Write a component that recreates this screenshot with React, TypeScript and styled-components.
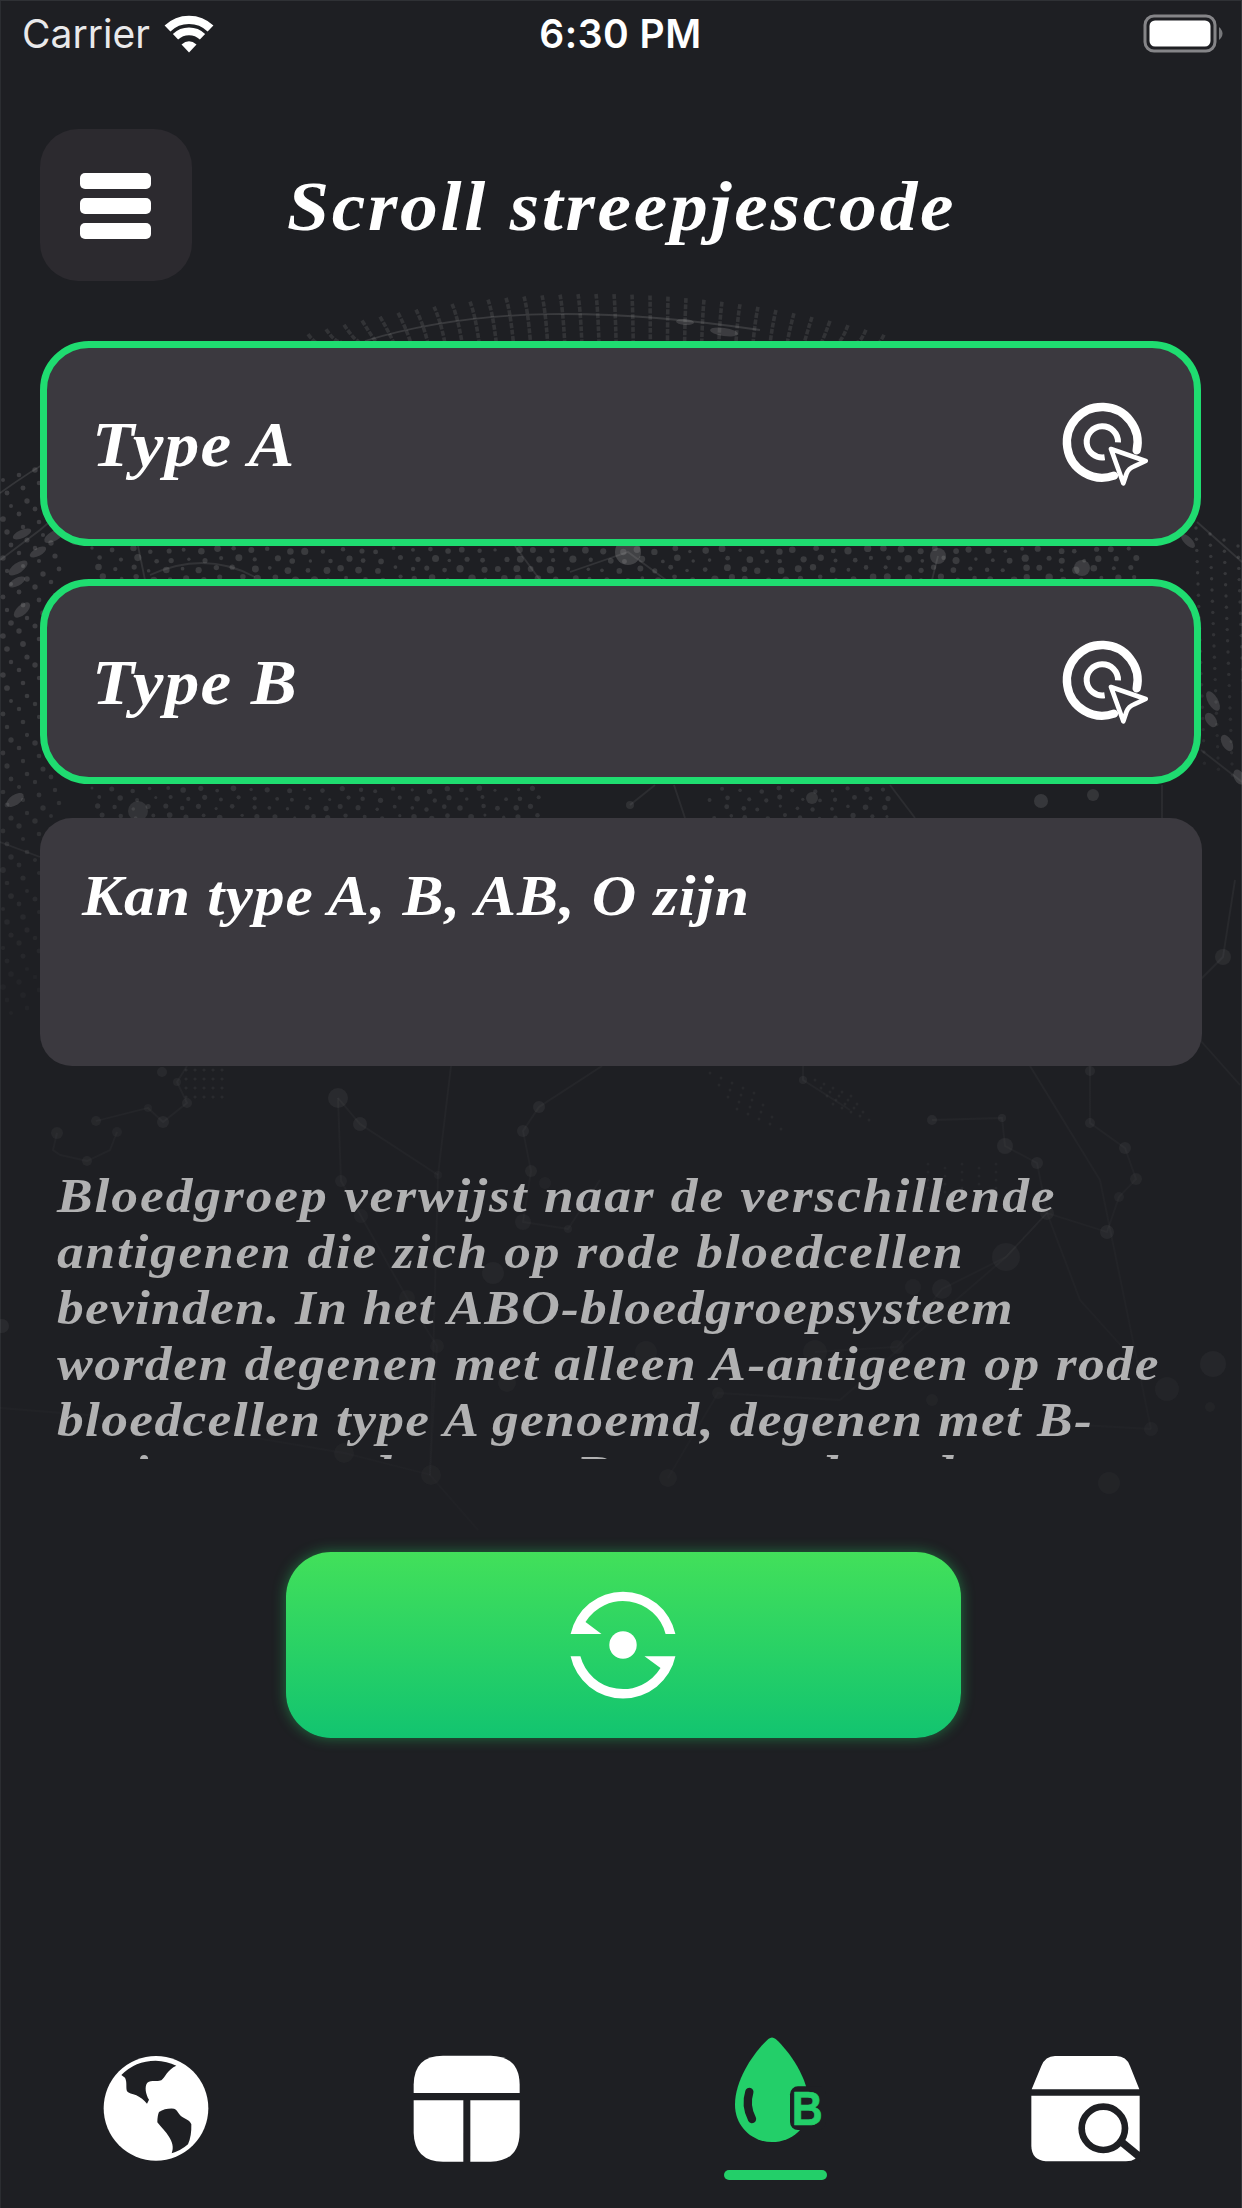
import React from "react";
import styled, { createGlobalStyle } from "styled-components";

const serif = `"Liberation Serif", "Times New Roman", serif`;
const sans = `Inter, "Liberation Sans", sans-serif`;

const GlobalStyle = createGlobalStyle`
  *, *::before, *::after { box-sizing: border-box; }
  body { margin: 0; background: #1e1f23; }
  button { border: 0; padding: 0; background: none; color: inherit; font: inherit; }
`;

const Screen = styled.main`
  position: relative;
  display: flex;
  flex-direction: column;
  width: 1242px;
  height: 2208px;
  overflow: hidden;
  background: #1e1f23;
  box-shadow: inset 0 1px #2f3135, inset 1px 0 #2b2d31, inset -1px 0 #34363a;
  color: #fff;
`;

const Backdrop = styled.svg`
  position: absolute;
  inset: 0;
  width: 1242px;
  height: 2208px;
`;

const StatusBar = styled.header`
  position: relative;
  display: grid;
  grid-template-columns: 1fr auto 1fr;
  align-items: center;
  height: 67px;
  padding: 0 19px 0 22px;
  font-family: ${sans};
`;

const Carrier = styled.div`
  display: flex;
  align-items: center;
  gap: 14px;
  font-size: 39px;
  color: #e9e9ea;
`;

const Clock = styled.time`
  margin-right: 4px;
  font-size: 39px;
  font-weight: 600;
  letter-spacing: 0.5px;
`;

const Battery = styled.svg`
  justify-self: end;
`;

const TopBar = styled.div`
  position: relative;
  display: flex;
  align-items: center;
  height: 152px;
  margin: 62px 40px 0;
`;

const MenuButton = styled.button`
  display: flex;
  flex-direction: column;
  align-items: center;
  justify-content: center;
  gap: 9px;
  width: 152px;
  height: 152px;
  padding: 2px 2px 0 0;
  border-radius: 38px;
  background: #2c2a2f;
`;

const MenuLine = styled.span`
  width: 71px;
  height: 16px;
  border-radius: 5px;
  background: #fff;
`;

/* Bold italic serif, slightly extended like a Century face. */
const WideText = styled.span<{ $spacing: number }>`
  display: block;
  transform: scaleX(1.08);
  transform-origin: 0 50%;
  letter-spacing: ${(p) => p.$spacing}px;
  white-space: nowrap;
`;

const Title = styled.h1`
  margin: 0;
  padding: 4px 0 0 95px;
  font: italic bold 70px/90px ${serif};
`;

const Fields = styled.section`
  position: relative;
  display: flex;
  flex-direction: column;
  margin: 60px 40px 0;
`;

const SelectField = styled.button`
  display: flex;
  align-items: center;
  justify-content: space-between;
  width: 1161px;
  height: 205px;
  margin-bottom: 33px;
  padding: 0 46px 0 45px;
  border: 7px solid #1fdc70;
  border-radius: 49px;
  background: #3b393f;
`;

const FieldLabel = styled.span`
  padding-top: 2px;
  font: italic bold 64px/80px ${serif};
`;

const ResultBox = styled.div`
  height: 248px;
  margin-top: 1px;
  padding: 43px 42px;
  border-radius: 32px;
  background: #3b393f;
  font: italic bold 57px/70px ${serif};
`;

const Description = styled.article`
  position: relative;
  height: 295px;
  margin: 98px 40px 0;
  padding: 4px 0 0 17px;
  overflow: hidden;
  color: #b1b1b2;
  font: italic bold 49.5px/55.9px ${serif};

  & > :last-child {
    margin-top: -3px;
  }
`;

const ConvertButton = styled.button`
  position: relative;
  display: flex;
  align-items: center;
  justify-content: center;
  align-self: flex-start;
  width: 675px;
  height: 186px;
  margin: 93px 0 0 286px;
  padding-right: 2px;
  border-radius: 45px;
  background: linear-gradient(#42e05a, #12c470);
  box-shadow: 0 0 14px rgba(36, 210, 100, 0.45);
`;

const TabBar = styled.nav`
  position: relative;
  display: flex;
  justify-content: space-between;
  align-items: flex-start;
  margin-top: 298px;
  padding: 0 101px 0 103px;
`;

const Tab = styled.button<{ $width: number }>`
  display: flex;
  flex-direction: column;
  align-items: center;
  width: ${(p) => p.$width}px;
  height: 150px;
`;

const ActiveBar = styled.span`
  width: 103px;
  height: 10px;
  margin-top: 8px;
  border-radius: 5px;
  background: #23cf69;
`;

type Dot = [number, number, number, number];

const noise = (n: number) => {
  const v = Math.sin(n * 127.1) * 43758.5453;
  return v - Math.floor(v);
};

const dots: Dot[] = [];
for (let col = 0; col < 60; col++) {
  for (let row = 0; row < 4; row++) {
    const x = 92 + col * 17.5 + (row % 2) * 5;
    if (x < 1160) dots.push([x + noise(col + row) * 8, 548 + row * 9.5 + noise(col * 5) * 4, 1.7 + noise(col * 7 + row) * 2, 0.19]);
    if (x < 540 || (x > 705 && x < 890))
      dots.push([x + noise(col + row) * 7, 788 + row * 9 + noise(col * 9) * 4, 1.5 + noise(col * 3 + row) * 1.4, 0.14]);
  }
}
for (let row = 0; row < 42; row++) {
  for (let col = 0; col < 5; col++) {
    const y = 480 + row * 13 - col * 5;
    const x = 3 + col * 16 + (row % 3) * 4;
    const fade = Math.max(0.04, 0.2 - Math.max(0, row - 16) * 0.007);
    if (x < 60) dots.push([x, y, 2 + noise(row * 5 + col) * 0.9, fade]);
  }
}
for (let row = 0; row < 22; row++) {
  for (let col = 0; col < 4; col++) {
    const y = 528 + row * 11.2 + col * 6;
    const x = 1196 + col * 14 + row * 0.4;
    dots.push([x, y, 1.7, 0.18 - row * 0.005]);
  }
}
for (let row = 0; row < 4; row++) {
  for (let col = 0; col < 5; col++) {
    dots.push([186 + col * 9, 1070 + row * 9, 1.6, 0.08]);
    dots.push([710 + col * 11 + row * 9, 1073 + row * 12 + col * 5, 1.5, 0.06]);
    dots.push([815 + col * 9 + row * 6, 1080 + row * 8 + col * 4, 1.5, 0.06]);
    dots.push([928 + col * 17, 1164 + row * 8 + (col % 2) * 4, 1.5, 0.05]);
  }
}

const rays = Array.from({ length: 33 }, (_, i) => {
  const x = 308 + i * 18;
  const t = (x - 595) / 290;
  return { x, top: 294 + 41 * t * t, lean: -t * 14 + 3 };
});

const nodes: Dot[] = [
  [628, 552, 13, 0.24], [938, 556, 8, 0.2], [1082, 568, 8, 0.2], [138, 811, 10, 0.14],
  [812, 798, 6, 0.15], [1041, 801, 7, 0.17], [1093, 795, 6, 0.15], [630, 805, 4, 0.12],
  [1223, 957, 8, 0.09], [162, 1072, 5, 0.07], [177, 1082, 4, 0.06], [187, 1103, 5, 0.07],
  [163, 1122, 6, 0.07], [148, 1108, 4, 0.05], [96, 1121, 5, 0.06], [57, 1133, 6, 0.06],
  [117, 1132, 5, 0.05], [87, 1161, 5, 0.06], [338, 1098, 10, 0.08], [360, 1124, 7, 0.08],
  [341, 1181, 6, 0.05], [361, 1216, 7, 0.04], [539, 1107, 6, 0.08], [523, 1131, 6, 0.07],
  [531, 1171, 6, 0.06], [545, 1183, 6, 0.04], [523, 1222, 8, 0.05], [568, 1229, 4, 0.05],
  [438, 1175, 4, 0.04], [1090, 1071, 5, 0.07], [803, 1080, 4, 0.07], [932, 1120, 5, 0.08],
  [1002, 1118, 4, 0.07], [1005, 1146, 8, 0.08], [1037, 1163, 6, 0.07], [1090, 1123, 5, 0.07],
  [1125, 1148, 6, 0.07], [1136, 1179, 6, 0.06], [1119, 1197, 5, 0.05], [1107, 1232, 7, 0.07],
  [1047, 1213, 7, 0.06], [1006, 1257, 14, 0.05], [942, 1289, 10, 0.05], [913, 1287, 8, 0.04],
  [493, 1273, 11, 0.05], [407, 1298, 8, 0.03], [437, 1346, 7, 0.03], [2, 1326, 7, 0.08],
  [646, 1352, 11, 0.03], [815, 1352, 12, 0.03], [897, 1347, 7, 0.03], [507, 1383, 9, 0.03],
  [718, 1393, 6, 0.03], [1213, 1364, 13, 0.05], [1167, 1389, 12, 0.04], [1210, 1407, 5, 0.03],
  [1151, 1429, 7, 0.04], [932, 1400, 6, 0.03], [344, 1453, 10, 0.03], [431, 1475, 10, 0.03],
  [668, 1478, 9, 0.03], [1109, 1483, 11, 0.03],
];

const patches = [
  [22, 534, 10, 4, -24], [54, 536, 11, 5, -30], [80, 538, 10, 5, -34], [38, 552, 9, 4, -28],
  [18, 568, 11, 5, -34], [17, 582, 9, 4, -28], [22, 610, 10, 5, -42], [15, 800, 10, 5, -34],
  [724, 332, 14, 4, 8], [685, 322, 9, 3, 4], [1188, 541, 9, 4, 45], [1213, 701, 11, 5, 60],
  [1211, 720, 8, 5, 55], [1227, 743, 9, 5, 60], [1239, 777, 8, 5, 65],
];

const webLines = [
  "M365 341C480 306 610 308 760 330", "M0 493Q60 450 110 430", "M0 560L40 530L75 500",
  "M138 546L145 580", "M515 546L540 580", "M570 572L628 552L666 580", "M150 575Q205 550 255 577",
  "M932 580L938 556", "M1197 522L1242 562", "M1201 750L1242 782", "M630 805L655 785", "M674 785L685 818",
  "M890 785L915 818", "M1162 785V818", "M0 842L40 857", "M1200 980L1223 957L1235 880",
  "M1200 1040L1240 1085", "M451 1066L438 1175L430 1475L478 1530", "M602 1066L539 1107L523 1131L531 1171L523 1222L568 1229L600 1180",
  "M338 1098L360 1124L438 1175", "M338 1098L341 1181L361 1216L407 1298L437 1346L430 1475", "M187 1066L177 1082L187 1103L163 1122L148 1108L96 1121",
  "M57 1133L53 1150L60 1155L87 1161L110 1150L117 1132", "M932 1120L1002 1118L1005 1146L1037 1163L1047 1213L1107 1232L1119 1197L1136 1179L1125 1148L1090 1123V1066",
  "M1030 1066L1100 1180L1151 1429", "M1047 1213L1006 1257L942 1289L897 1347L815 1352", "M1006 1257L1047 1213L1080 1300L1125 1350",
  "M1006 1257L840 1400L718 1393L668 1478", "M0 1408L150 1420L344 1453L431 1475", "M1151 1429L1080 1425", "M803 1066V1080L850 1110",
];

function NetworkBackdrop() {
  return (
    <Backdrop viewBox="0 0 1242 2208" aria-hidden="true">
      <defs>
        <linearGradient id="lineFade" gradientUnits="userSpaceOnUse" x1="0" y1="300" x2="0" y2="1540">
          <stop offset="0" stopColor="#aaa" stopOpacity="0.2" />
          <stop offset="0.5" stopColor="#aaa" stopOpacity="0.07" />
          <stop offset="0.7" stopColor="#aaa" stopOpacity="0.035" />
          <stop offset="1" stopColor="#aaa" stopOpacity="0.015" />
        </linearGradient>
      </defs>
      <g fill="none" stroke="#aaa" strokeOpacity="0.15" strokeWidth="3.6" strokeDasharray="5 1.5">
        {rays.map((r) => (
          <path key={r.x} d={`M${r.x} ${r.top}Q${r.x + r.lean * 0.6} ${r.top + 14} ${r.x + r.lean} 342`} />
        ))}
      </g>
      <g fill="none" stroke="url(#lineFade)" strokeWidth="1.8">
        {webLines.map((d) => <path key={d} d={d} />)}
      </g>
      <g fill="#b4b4b4">
        {dots.map(([x, y, r, o], i) => <circle key={i} cx={x} cy={y} r={r} opacity={o} />)}
        {nodes.map(([x, y, r, o], i) => <circle key={i} cx={x} cy={y} r={r} opacity={o} />)}
        {patches.map(([x, y, rx, ry, a], i) => (
          <ellipse key={i} cx={x} cy={y} rx={rx} ry={ry} opacity="0.2" transform={`rotate(${a} ${x} ${y})`} />
        ))}
      </g>
    </Backdrop>
  );
}

const WifiIcon = () => (
  <svg width="50" height="38" viewBox="0 0 50 38" fill="none">
    <path d="M3.5 13.5A31 31 0 0 1 46.5 13.5" stroke="#fff" strokeWidth="8.4" />
    <path d="M11.5 21.8A19.5 19.5 0 0 1 38.5 21.8" stroke="#fff" strokeWidth="7.6" />
    <path d="M17.5 29.5Q25 23 32.5 29.5L25 37.5Z" fill="#fff" />
  </svg>
);

const BatteryIcon = () => (
  <Battery width="80" height="40" viewBox="0 0 80 40">
    <rect x="2" y="2" width="70" height="35" rx="9" fill="none" stroke="#858588" strokeWidth="3" />
    <rect x="6.5" y="6.5" width="61" height="26" rx="5.5" fill="#fff" />
    <path d="M76 13Q79.5 16 79.5 19.5T76 26Z" fill="#77787b" />
  </Battery>
);

const TargetIcon = () => (
  <svg width="88" height="86" viewBox="60 62 264 258" fill="none" stroke="#fff" strokeLinecap="round" strokeLinejoin="round">
    <path d="M290 210A106 106 0 1 0 222 286" strokeWidth="25" />
    <path d="M234 186A47 47 0 1 0 194 231" strokeWidth="18" strokeLinecap="butt" />
    <path d="M213 206L317 242L282 258Q266 264 260 279L250 309Z" strokeWidth="14" />
  </svg>
);

const ConvertIcon = () => (
  <svg width="112" height="112" viewBox="-56 -56 112 112" fill="#fff">
    <path d="M-52.4 -11A53.6 53.6 0 0 1 52.4 -11H42.6A44 44 0 0 0 -37.5 -23L-21.5 -11Z" />
    <path d="M52.4 11.3A53.6 53.6 0 0 1 -52.4 11.3H-42.6A44 44 0 0 0 37.5 23L21.5 11.3Z" />
    <circle r="13.7" />
  </svg>
);

const GlobeIcon = () => (
  <svg width="106" height="126" viewBox="68 49 318 378">
    <circle cx="227" cy="266" r="157" fill="#fff" />
    <path fill="#1e1f23" d="M123 166Q165 123 226 123Q260 124 288 138C262 149 254 173 243 182C232 187 213 180 201 189C192 200 196 224 206 240L200 252C190 241 181 233 168 227C155 223 145 221 140 215C136 203 141 187 134 174Z" />
    <path fill="#1e1f23" d="M236 277Q255 265 281 267C291 269 294 284 306 292C316 299 329 302 333 314Q334 350 323 374Q303 392 274 401C281 382 276 367 266 351C257 336 243 323 231 308Q231 288 236 277Z" />
  </svg>
);

const LayoutIcon = () => (
  <svg width="107" height="126" viewBox="999 48 321 378" fill="#fff">
    <path d="M1001 219V194Q1002 107 1089 107H1232Q1318 108 1319 194V219Z" />
    <path d="M1001 241H1150V425H1089Q1003 424 1001 338Z" />
    <path d="M1171 241H1319V338Q1317 424 1232 425H1171Z" />
  </svg>
);

const BloodIcon = () => (
  <svg width="104" height="126" viewBox="71 47 312 378" fill="#23cf69">
    <path d="M207 56Q218 47 229 56C268 91 329 174 329 253C329 322 279 365 218 365C157 365 107 317 107 253C107 174 168 91 207 56Z" />
    <path d="M150 215Q137 256 158 296" fill="none" stroke="#1e1f23" strokeWidth="25" strokeLinecap="round" />
    <rect x="272" y="198" width="108" height="131" rx="24" fill="#1e1f23" />
    <text x="277" y="313" fontFamily="Liberation Sans, sans-serif" fontWeight="700" fontSize="146" textLength="93" lengthAdjust="spacingAndGlyphs" stroke="#23cf69" strokeWidth="2" strokeLinejoin="round">B</text>
  </svg>
);

const SearchBoxIcon = () => (
  <svg width="110" height="126" viewBox="993 48 330 378">
    <g fill="#fff">
      <path d="M995 208L1024 138Q1036 108 1065 108H1249Q1279 108 1290 138L1318 208Z" />
      <path d="M994 227H1319V393Q1313 424 1278 424H1037Q995 420 994 378Z" />
    </g>
    <g fill="none" stroke="#1e1f23">
      <circle cx="1210" cy="325" r="65" strokeWidth="20" />
      <path d="M1261 363L1326 416" strokeWidth="23" />
    </g>
  </svg>
);

const paragraph: { text: string; spacing: number }[] = [
  { text: "Bloedgroep verwijst naar de verschillende", spacing: 1.78 },
  { text: "antigenen die zich op rode bloedcellen", spacing: 1.6 },
  { text: "bevinden. In het ABO-bloedgroepsysteem", spacing: 1.15 },
  { text: "worden degenen met alleen A-antigeen op rode", spacing: 1.44 },
  { text: "bloedcellen type A genoemd, degenen met B-", spacing: 1.25 },
  { text: "antigeen worden type B genoemd en degenen", spacing: 1.6 },
];

export default function App() {
  return (
    <>
      <GlobalStyle />
      <Screen>
        <NetworkBackdrop />
        <StatusBar>
          <Carrier>
            Carrier
            <WifiIcon />
          </Carrier>
          <Clock>6:30 PM</Clock>
          <BatteryIcon />
        </StatusBar>

        <TopBar>
          <MenuButton aria-label="Menu">
            <MenuLine />
            <MenuLine />
            <MenuLine />
          </MenuButton>
          <Title>
            <WideText $spacing={2.5}>Scroll streepjescode</WideText>
          </Title>
        </TopBar>

        <Fields>
          <SelectField>
            <FieldLabel><WideText $spacing={1.1}>Type A</WideText></FieldLabel>
            <TargetIcon />
          </SelectField>
          <SelectField>
            <FieldLabel><WideText $spacing={1.1}>Type B</WideText></FieldLabel>
            <TargetIcon />
          </SelectField>
          <ResultBox>
            <WideText $spacing={0.9}>Kan type A, B, AB, O zijn</WideText>
          </ResultBox>
        </Fields>

        <Description>
          {paragraph.map((line) => (
            <WideText key={line.text} $spacing={line.spacing}>{line.text}</WideText>
          ))}
        </Description>

        <ConvertButton aria-label="Convert">
          <ConvertIcon />
        </ConvertButton>

        <TabBar>
          <Tab $width={106} aria-label="World"><GlobeIcon /></Tab>
          <Tab $width={107} aria-label="Layout"><LayoutIcon /></Tab>
          <Tab $width={104} aria-label="Blood type">
            <BloodIcon />
            <ActiveBar />
          </Tab>
          <Tab $width={110} aria-label="Search"><SearchBoxIcon /></Tab>
        </TabBar>
      </Screen>
    </>
  );
}
